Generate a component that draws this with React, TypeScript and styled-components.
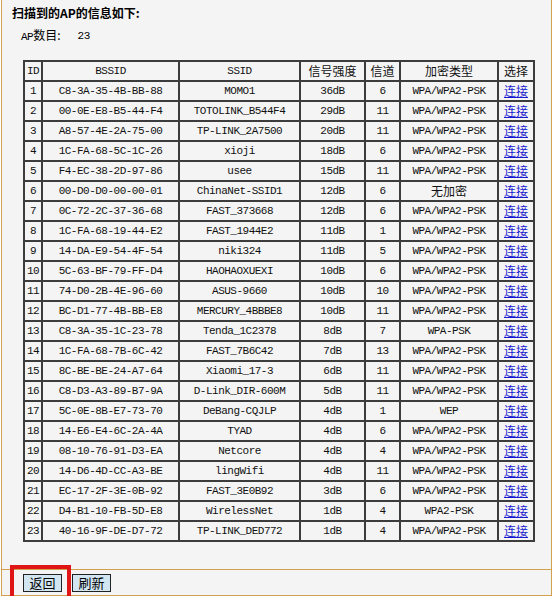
import React from "react";
import styled, { createGlobalStyle } from "styled-components";

const GlobalStyle = createGlobalStyle`
  html, body { margin: 0; padding: 0; background: #ffffff; }
  body { font-family: "Liberation Mono", "Noto Sans CJK SC", monospace; color: #000; }
`;

const Frame = styled.div`
  margin-left: 1px;
  width: 549px;
  border-left: 1px solid #d3a14e;
  border-right: 1px solid #d3a14e;
  border-bottom: 1px solid #d3a14e;
  background: #f4f4f4;
`;

const Body = styled.div`
  height: 570px;
  box-sizing: border-box;
  border-bottom: 1px solid #d3a14e;
  padding-top: 5px;
`;

const Title = styled.div`
  font-family: "Noto Sans CJK SC", sans-serif;
  font-weight: bold;
  font-size: 12px;
  line-height: 16px;
  padding-left: 10px;
`;

const Count = styled.div`
  display: flex;
  align-items: center;
  font-family: "Noto Sans CJK SC", sans-serif;
  font-size: 12px;
  line-height: 16px;
  padding-left: 19px;
  margin-top: 6px;
  gap: 17px;
`;

const Mono = styled.span`
  font-family: "Liberation Mono", monospace;
  font-size: 11px;
  letter-spacing: -0.5px;
`;

const Table = styled.table`
  margin-top: 15px;
  margin-left: 21px;
  border-collapse: collapse;
  table-layout: fixed;
  width: 512px;
  border: 2px solid #3c3c3c;
`;

const Cell = styled.td<{ $cjk?: boolean }>`
  border: 2px solid #3c3c3c;
  height: 18px;
  padding: 0;
  text-align: center;
  white-space: nowrap;
  overflow: hidden;
  font-family: ${(p) =>
    p.$cjk ? `"Noto Sans CJK SC", sans-serif` : `"Liberation Mono", monospace`};
  font-size: ${(p) => (p.$cjk ? "12px" : "11px")};
  letter-spacing: ${(p) => (p.$cjk ? "0" : "-0.5px")};
  line-height: 16px;
  color: #111;
`;

const Link = styled.a`
  color: #1a1ad0;
  text-decoration: underline;
  cursor: pointer;
`;

const ButtonRow = styled.div`
  position: relative;
  height: 25px;
  display: flex;
  align-items: center;
  gap: 10px;
  padding-left: 21px;
`;

const Button = styled.button`
  width: 39px;
  height: 18px;
  padding: 0;
  margin: 0;
  background: #d2e6f1;
  border: 1px solid #222;
  font-family: "Noto Sans CJK SC", sans-serif;
  font-size: 13px;
  line-height: 14px;
  color: #000;
`;

const Highlight = styled.div`
  position: absolute;
  left: 8px;
  top: -5px;
  width: 53px;
  height: 40px;
  border: 4px solid #e01515;
  pointer-events: none;
`;

type Row = [string, string, string, string, string];

const rows: Row[] = [
  ["C8-3A-35-4B-BB-88", "MOMO1", "36dB", "6", "WPA/WPA2-PSK"],
  ["00-0E-E8-B5-44-F4", "TOTOLINK_B544F4", "29dB", "11", "WPA/WPA2-PSK"],
  ["A8-57-4E-2A-75-00", "TP-LINK_2A7500", "20dB", "11", "WPA/WPA2-PSK"],
  ["1C-FA-68-5C-1C-26", "xioji", "18dB", "6", "WPA/WPA2-PSK"],
  ["F4-EC-38-2D-97-86", "usee", "15dB", "11", "WPA/WPA2-PSK"],
  ["00-D0-D0-00-00-01", "ChinaNet-SSID1", "12dB", "6", "无加密"],
  ["0C-72-2C-37-36-68", "FAST_373668", "12dB", "6", "WPA/WPA2-PSK"],
  ["1C-FA-68-19-44-E2", "FAST_1944E2", "11dB", "1", "WPA/WPA2-PSK"],
  ["14-DA-E9-54-4F-54", "niki324", "11dB", "5", "WPA/WPA2-PSK"],
  ["5C-63-BF-79-FF-D4", "HAOHAOXUEXI", "10dB", "6", "WPA/WPA2-PSK"],
  ["74-D0-2B-4E-96-60", "ASUS-9660", "10dB", "10", "WPA/WPA2-PSK"],
  ["BC-D1-77-4B-BB-E8", "MERCURY_4BBBE8", "10dB", "11", "WPA/WPA2-PSK"],
  ["C8-3A-35-1C-23-78", "Tenda_1C2378", "8dB", "7", "WPA-PSK"],
  ["1C-FA-68-7B-6C-42", "FAST_7B6C42", "7dB", "13", "WPA/WPA2-PSK"],
  ["8C-BE-BE-24-A7-64", "Xiaomi_17-3", "6dB", "11", "WPA/WPA2-PSK"],
  ["C8-D3-A3-89-B7-9A", "D-Link_DIR-600M", "5dB", "11", "WPA/WPA2-PSK"],
  ["5C-0E-8B-E7-73-70", "DeBang-CQJLP", "4dB", "1", "WEP"],
  ["14-E6-E4-6C-2A-4A", "TYAD", "4dB", "6", "WPA/WPA2-PSK"],
  ["08-10-76-91-D3-EA", "Netcore", "4dB", "4", "WPA/WPA2-PSK"],
  ["14-D6-4D-CC-A3-BE", "lingWifi", "4dB", "11", "WPA/WPA2-PSK"],
  ["EC-17-2F-3E-0B-92", "FAST_3E0B92", "3dB", "6", "WPA/WPA2-PSK"],
  ["D4-B1-10-FB-5D-E8", "WirelessNet", "1dB", "4", "WPA2-PSK"],
  ["40-16-9F-DE-D7-72", "TP-LINK_DED772", "1dB", "4", "WPA/WPA2-PSK"],
];

const colWidths = [18, 137, 121, 65, 35, 98, 36];

export default function App() {
  return (
    <>
      <GlobalStyle />
      <Frame>
        <Body>
          <Title>扫描到的AP的信息如下:</Title>
          <Count>
            <span>
              <Mono>AP</Mono>数目:
            </span>
            <Mono>23</Mono>
          </Count>
          <Table>
            <colgroup>
              {colWidths.map((w, i) => (
                <col key={i} style={{ width: w }} />
              ))}
            </colgroup>
            <tbody>
              <tr>
                <Cell>ID</Cell>
                <Cell>BSSID</Cell>
                <Cell>SSID</Cell>
                <Cell $cjk>信号强度</Cell>
                <Cell $cjk>信道</Cell>
                <Cell $cjk>加密类型</Cell>
                <Cell $cjk>选择</Cell>
              </tr>
              {rows.map((r, i) => (
                <tr key={i}>
                  <Cell>{i + 1}</Cell>
                  <Cell>{r[0]}</Cell>
                  <Cell>{r[1]}</Cell>
                  <Cell>{r[2]}</Cell>
                  <Cell>{r[3]}</Cell>
                  <Cell $cjk={r[4] === "无加密"}>{r[4]}</Cell>
                  <Cell $cjk>
                    <Link>连接</Link>
                  </Cell>
                </tr>
              ))}
            </tbody>
          </Table>
        </Body>
        <ButtonRow>
          <Button>返回</Button>
          <Button>刷新</Button>
          <Highlight />
        </ButtonRow>
      </Frame>
    </>
  );
}
